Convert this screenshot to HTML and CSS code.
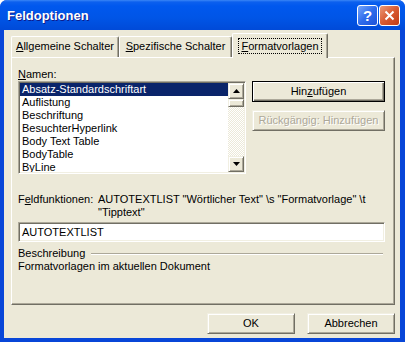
FILE: index.html
```html
<!DOCTYPE html>
<html>
<head>
    <meta charset="utf-8">
    <title>Feldoptionen</title>
    <link rel="stylesheet" href="styles.css">
</head>
<body>
    <div class="window">
        <!-- Title bar -->
        <div class="titlebar">
            <span class="title">Feldoptionen</span>
            <div class="caption-buttons">
                <div class="cap-btn help">?</div>
                <div class="cap-btn close">
                    <svg width="11" height="11" viewBox="0 0 11 11"><path d="M1.5 1.5 L9.5 9.5 M9.5 1.5 L1.5 9.5" stroke="#fff" stroke-width="2"/></svg>
                </div>
            </div>
        </div>

        <div class="content">
            <!-- Tabs -->
            <div class="tabs">
                <div class="tab tab-general"><u>A</u>llgemeine Schalter</div>
                <div class="tab tab-specific"><u>S</u>pezifische Schalter</div>
                <div class="tab tab-styles active"><span class="focus"><u>F</u>ormatvorlagen</span></div>
            </div>

            <div class="panel">
                <div class="label"><u>N</u>amen:</div>
                <div class="names-row">
                    <div class="listbox">
                        <ul class="items">
                            <li class="selected">Absatz-Standardschriftart</li>
                            <li>Auflistung</li>
                            <li>Beschriftung</li>
                            <li>BesuchterHyperlink</li>
                            <li>Body Text Table</li>
                            <li>BodyTable</li>
                            <li>ByLine</li>
                        </ul>
                        <div class="scrollbar">
                            <div class="sb-btn"><svg width="7" height="4" viewBox="0 0 7 4"><polygon points="3.5,0 7,4 0,4" fill="#000"/></svg></div>
                            <div class="sb-thumb"></div>
                            <div class="sb-track"></div>
                            <div class="sb-btn"><svg width="7" height="4" viewBox="0 0 7 4"><polygon points="0,0 7,0 3.5,4" fill="#000"/></svg></div>
                        </div>
                    </div>
                    <div class="side-buttons">
                        <div class="btn default">Hin<u>z</u>ufügen</div>
                        <div class="btn disabled">Rückgängig: Hinzufügen</div>
                    </div>
                </div>

                <div class="fields">
                    <div class="fields-label">F<u>e</u>ldfunktionen:</div>
                    <div class="fields-value">AUTOTEXTLIST "Wörtlicher Text" \s "Formatvorlage" \t<br>"Tipptext"</div>
                </div>
                <div class="input">AUTOTEXTLIST</div>

                <div class="desc-head">
                    <span>Beschreibung</span>
                    <div class="rule"></div>
                </div>
                <div class="desc-text">Formatvorlagen im aktuellen Dokument</div>
            </div>

            <div class="footer">
                <div class="btn">OK</div>
                <div class="btn">Abbrechen</div>
            </div>
        </div>
    </div>
</body>
</html>
```

FILE: styles.css
```css
body {
    margin: 0;
    background: #fff;
    font-family: "Liberation Sans", Arial, sans-serif;
    font-size: 11px;
    line-height: 13px;
    color: #000;
}

.window {
    width: 405px;
    height: 342px;
    display: flex;
    flex-direction: column;
    background: #0846d8;
    border-radius: 7px 7px 0 0;
    overflow: hidden;
}

/* Title bar */
.titlebar {
    height: 30px;
    flex: none;
    display: flex;
    align-items: center;
    padding: 0 5px 0 7px;
    background: linear-gradient(#3a86f6 0, #0c60ee 2px, #0058ee 6px, #0055e6 60%, #004ad8 100%);
}

.title {
    color: #fff;
    font-weight: bold;
    font-size: 13px;
    text-shadow: 1px 1px #0f1b8a;
}

.caption-buttons {
    margin-left: auto;
    display: flex;
    gap: 1px;
}

.cap-btn {
    width: 21px;
    height: 21px;
    box-sizing: border-box;
    border: 1px solid #fff;
    border-radius: 3px;
    display: flex;
    align-items: center;
    justify-content: center;
    color: #fff;
}

.help {
    background: linear-gradient(135deg, #76a6fb, #2e6cec 50%, #1c52d8);
    font-weight: bold;
    font-size: 15px;
}

.close {
    background: linear-gradient(135deg, #eb9a78, #d85a32 50%, #c23c14);
}

/* Dialog body */
.content {
    flex: 1;
    margin: 0 5px 4px 4px;
    padding: 3px 5px 0 7px;
    background: #ece9d8;
    display: flex;
    flex-direction: column;
}

.tabs {
    display: flex;
    align-items: flex-end;
    height: 24px;
}

.tab {
    height: 21px;
    box-sizing: border-box;
    border: 1px solid;
    border-color: #fff #716f64 transparent #fff;
    border-bottom: none;
    border-radius: 2px 2px 0 0;
    box-shadow: inset -1px 0 #aca899;
    padding-top: 3px;
    text-align: center;
    white-space: nowrap;
}

.tab-general { width: 108px; }
.tab-specific { width: 113px; }

.tab.active {
    width: 96px;
    height: 25px;
    margin-bottom: -1px;
    padding-top: 6px;
    position: relative;
    z-index: 1;
    background: #ece9d8;
}

.focus {
    outline: 1px dotted #000;
    padding: 1px 2px;
}

.panel {
    height: 248px;
    box-sizing: border-box;
    border: 1px solid;
    border-color: #fff #716f64 #716f64 #fff;
    box-shadow: inset -1px -1px #aca899;
    padding: 10px 9px 0 6px;
}

.names-row {
    display: flex;
    gap: 6px;
}

.listbox {
    width: 228px;
    height: 93px;
    box-sizing: border-box;
    border: 1px solid;
    border-color: #aca899 #fff #fff #aca899;
    box-shadow: inset 1px 1px #716f64, inset -1px -1px #f1efe2;
    padding: 1px;
    display: flex;
    background: #fff;
}

.items {
    flex: 1;
    list-style: none;
    margin: 0;
    padding: 0;
    overflow: hidden;
}

.items li {
    height: 13px;
    padding-left: 2px;
    white-space: nowrap;
}

.items li.selected {
    background: #0a246a;
    color: #fff;
}

.scrollbar {
    width: 16px;
    display: flex;
    flex-direction: column;
    background: repeating-conic-gradient(#fff 0 25%, #ece9d8 0 50%) 0 0 / 2px 2px;
}

.sb-btn,
.sb-thumb {
    box-sizing: border-box;
    background: #ece9d8;
    border: 1px solid;
    border-color: #f1efe2 #716f64 #716f64 #f1efe2;
    box-shadow: inset 1px 1px #fff, inset -1px -1px #aca899;
}

.sb-btn {
    height: 16px;
    display: flex;
    align-items: center;
    justify-content: center;
}

.sb-thumb { height: 8px; }
.sb-track { flex: 1; }

.side-buttons {
    width: 133px;
    display: flex;
    flex-direction: column;
    gap: 8px;
}

/* Classic 3D push button */
.btn {
    height: 21px;
    box-sizing: border-box;
    display: flex;
    align-items: center;
    justify-content: center;
    background: #ece9d8;
    border: 1px solid;
    border-color: #f1efe2 #716f64 #716f64 #f1efe2;
    box-shadow: inset 1px 1px #fff, inset -1px -1px #aca899;
    white-space: nowrap;
}

.btn.default {
    border-color: #000;
    box-shadow: inset 1px 1px #fff, inset -1px -1px #716f64, inset -2px -2px #aca899;
}

.btn.disabled {
    color: #aca899;
    text-shadow: 1px 1px #fff;
}

.fields {
    display: flex;
    margin-top: 19px;
}

.fields-label {
    width: 80px;
    flex: none;
}

.input {
    margin-top: 3px;
    height: 20px;
    box-sizing: border-box;
    border: 1px solid;
    border-color: #aca899 #fff #fff #aca899;
    box-shadow: inset 1px 1px #716f64, inset -1px -1px #f1efe2;
    background: #fff;
    padding: 0 3px;
    display: flex;
    align-items: center;
}

.desc-head {
    display: flex;
    align-items: center;
    margin-top: 5px;
}

.desc-head .rule {
    flex: 1;
    margin: 0 2px 0 6px;
    border-top: 1px solid #aca899;
    border-bottom: 1px solid #fff;
}

.footer {
    display: flex;
    justify-content: flex-end;
    gap: 12px;
    margin-top: 8px;
}

.footer .btn { width: 88px; }
```
